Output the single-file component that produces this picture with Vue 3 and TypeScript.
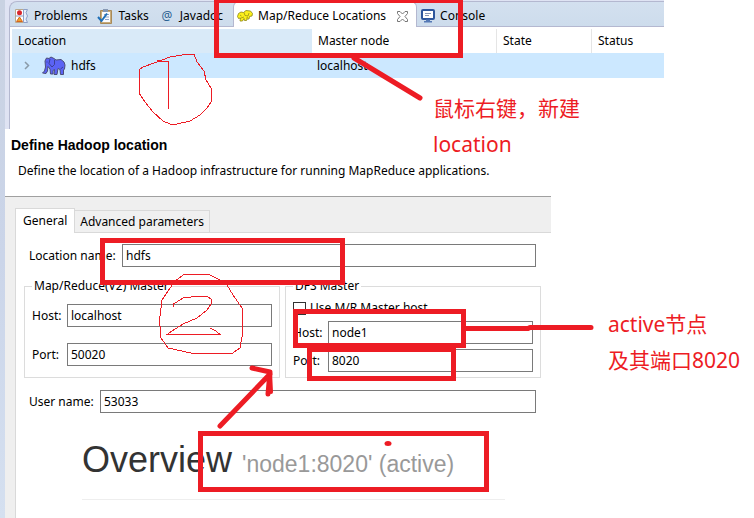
<script setup lang="ts">
import { ref } from 'vue'

const locationName = ref('hdfs')
const mrHost = ref('localhost')
const mrPort = ref('50020')
const dfsHost = ref('node1')
const dfsPort = ref('8020')
const userName = ref('53033')
const useMrHost = ref(false)

interface Frame { x: number; y: number; w: number; h: number }
// Centre lines of the 5px marker frames
const frames: Frame[] = [
  { x: 216, y: 0, w: 244, h: 55 },
  { x: 102, y: 240, w: 240, h: 42 },
  { x: 295, y: 311, w: 168, h: 34 },
  { x: 309, y: 349, w: 144, h: 29 },
  { x: 200, y: 433, w: 286, h: 56 },
]
</script>

<template>
  <div class="page">
    <div class="edge"></div>
    <main class="main">
      <section class="view">
        <div class="tabbar" role="tablist">
          <button class="tab" role="tab">
            <svg class="icon" width="15" height="16" viewBox="0 0 15 16">
              <path d="M1.500 1.500h8v13h-8z" fill="#fff" stroke="#b9a98c" />
              <path d="M1.500 8h8" stroke="#8d9cc0" />
              <path d="M9.500 1.500h4q-3 3 0 6.500q-3 3 0 6.500h-4z" fill="#e8eefb" stroke="#8ea0c8" />
              <circle cx="5.500" cy="4.800" r="2.500" fill="#d8262c" />
              <path d="M5.500 9l3 4.500h-6z" fill="#f0a429" stroke="#d6641c" />
            </svg>
            <span>Problems</span>
          </button>
          <button class="tab" role="tab">
            <svg class="icon" width="16" height="16" viewBox="0 0 16 16">
              <path d="M3.500 2.500h11v13h-11z" fill="#c9ad7c" stroke="#a98a58" />
              <path d="M5 4h8v10H5z" fill="#fbfcff" />
              <path d="M6 1h5v3H6z" fill="#8798b4" />
              <path d="M7 6.500h5M7 9h5M8 11.500h4" stroke="#8fa5cc" />
              <path d="M1 9l3.500 4L10 5.500" fill="none" stroke="#2070b8" stroke-width="2" />
            </svg>
            <span>Tasks</span>
          </button>
          <button class="tab" role="tab">
            <span class="at">@</span>
            <span>Javadoc</span>
          </button>
          <button class="tab active" role="tab" aria-selected="true">
            <svg class="icon" width="16" height="16" viewBox="0 0 16 16">
              <path d="M0.500 8.500L1.500 5.500L4 4L6.500 4.500L9 2.500L13.500 3L15.500 5.500L15 8L12.500 8.500L12 11H10L9.500 12.500H7.500L7 10.500L5.500 13H3L3.500 10L1.500 10.500z" fill="#fbf01c" stroke="#8c8413" stroke-width="0.800" />
              <path d="M3 7l1.500 1M7 4.500l1 3 3 .5 1-3M4 10l3-1M9 10.500l2-1.500" fill="none" stroke="#9b9115" stroke-width="0.800" />
            </svg>
            <span>Map/Reduce Locations</span>
            <svg class="close" width="11" height="11" viewBox="0 0 11 11">
              <path d="M0.500 0.500h2.500l2.500 2.500L8 0.500h2.500v2L8 5.500l2.500 3v2H8L5.500 8L3 10.500H0.500v-2L3 5.500L0.500 2.500z" fill="#fff" stroke="#777" />
            </svg>
          </button>
          <button class="tab" role="tab">
            <svg class="icon" width="14" height="14" viewBox="0 0 14 14">
              <rect x="1" y="1" width="12" height="9" rx="1" fill="#fff" stroke="#2c559c" stroke-width="2" />
              <path d="M4 4.500h6M4 6.500h4" stroke="#8494b4" />
              <path d="M5 10.500h4v1.500h2v1.500H3v-1.500h2z" fill="#5579b5" />
            </svg>
            <span>Console</span>
          </button>
        </div>
        <table class="grid">
          <thead>
            <tr><th class="sorted">Location</th><th>Master node</th><th>State</th><th>Status</th></tr>
          </thead>
          <tbody>
            <tr>
              <td>
                <div class="node">
                  <svg width="6" height="9" viewBox="0 0 6 9"><path d="M1 1l3.500 3.500L1 8" fill="none" stroke="#8a9aa8" stroke-width="1.500" /></svg>
                  <svg class="elephant" width="24" height="20" viewBox="0 0 24 20">
                    <path d="M3 5L4.500 2L7 2.500L9 1L12 2.500L14 4L19 3.500L22 6L23 9L22.500 13L21.500 14V18.500H18.500L18 13.500L16 12.500L15 18.500H12L12.500 13.500L11 14.500V18H8.500L8 13L6 10.500L5.500 15L4 17.500L0.500 17L2.500 15L3.500 11z" fill="#5b63f5" stroke="#4b4d78" />
                    <path d="M8 3L7 7.500L10 11L12.500 8.500L12.500 4M18.500 13l2.500-2M4.500 6h1" fill="none" stroke="#3c4094" />
                  </svg>
                  <span>hdfs</span>
                </div>
              </td>
              <td class="host">localhost</td><td></td><td></td>
            </tr>
          </tbody>
        </table>
      </section>

      <section class="dialog">
        <header class="banner">
          <h2>Define Hadoop location</h2>
          <p>Define the location of a Hadoop infrastructure for running MapReduce applications.</p>
        </header>
        <div class="folder">
          <div class="foldertabs" role="tablist">
            <button class="ftab on" role="tab" aria-selected="true">General</button>
            <button class="ftab" role="tab">Advanced parameters</button>
            <span class="rest"></span>
          </div>
          <div class="pane">
            <div class="row name">
              <label for="loc">Location name:</label><input id="loc" v-model="locationName" />
            </div>
            <div class="groups">
              <fieldset>
                <legend>Map/Reduce(V2) Master</legend>
                <div class="fields loose">
                  <div class="row"><label for="mh">Host:</label><input id="mh" v-model="mrHost" /></div>
                  <div class="row"><label for="mp">Port:</label><input id="mp" v-model="mrPort" /></div>
                </div>
              </fieldset>
              <fieldset>
                <legend>DFS Master</legend>
                <div class="fields">
                  <label class="check"><input v-model="useMrHost" type="checkbox" />Use M/R Master host</label>
                  <div class="row"><label for="dh">Host:</label><input id="dh" v-model="dfsHost" /></div>
                  <div class="row"><label for="dp">Port:</label><input id="dp" v-model="dfsPort" /></div>
                </div>
              </fieldset>
            </div>
            <div class="row user">
              <label for="un">User name:</label><input id="un" v-model="userName" />
            </div>
            <h1 class="overview">Overview <small>'node1:8020' (active)</small></h1>
          </div>
        </div>
      </section>
    </main>

    <svg class="marks" width="754" height="518" viewBox="0 0 754 518" aria-hidden="true">
      <g fill="none" stroke="#ed1c24" stroke-width="5" transform="translate(0.5 0.5)">
        <rect v-for="(f, i) in frames" :key="i" :x="f.x" :y="f.y" :width="f.w" :height="f.h" />
      </g>
      <g fill="none" stroke="#ed1c24" stroke-width="5" stroke-linecap="round" stroke-linejoin="round">
        <path d="M354 58L420 98" />
        <path d="M466 328.500H528L530 327.500H591" />
        <path d="M220 426L270 374M252 368L270 372L268 394" />
        <path d="M270 372L271 392" stroke-width="4" />
      </g>
      <ellipse cx="388" cy="443.500" rx="3.500" ry="2.500" fill="#ed1c24" />
      <g class="pen" fill="none" stroke="#ed1c24">
        <path d="M188 54H194L197 62L204 71L206 80L211 88V102L207 108L200 115L190 121L177 124H170L163 121L153 112L145 102L139 93V70L143 67L157 62L170 57L182 55z" />
        <path d="M160 60L157 61H168.500V108.500" />
        <path d="M175 281L184 274.500H209L218 279L227 285L233 295L242 308V337L240 348L232 353.500H193L168 348L161 338L159.500 320L162 300L166 294z" />
        <path d="M173.500 307V304L183 298L200 296H207L211 299V304L207 310L197 318L183 324L172 331L167 334.500H220L216 331L210 328" />
      </g>
    </svg>
    <p class="note first">鼠标右键，新建<br />location</p>
    <p class="note second">active节点<br />及其端口8020</p>
  </div>
</template>

<style>
body {
  margin: 0;
  background: #fff;
}
</style>

<style scoped>
.page {
  position: relative;
  display: flex;
  min-height: 100vh;
  overflow: hidden;
  color: #000;
  font: 12px/16px "Noto Sans", "Noto Sans CJK SC", sans-serif;
}
.edge {
  flex: 0 0 5px;
  background: linear-gradient(#c9d2e2, #cbd5e9 50%, #d5e0f0);
}
.main {
  flex: 1;
  display: flex;
  flex-direction: column;
}
button,
input {
  font: inherit;
  color: inherit;
}
.view {
  box-sizing: border-box;
  max-width: 659px;
  height: 129px;
  padding-top: 1px;
  background: #dfe3f3;
  padding-left: 4px;
  display: flex;
  flex-direction: column;
}
.tabbar {
  display: flex;
  height: 26px;
  box-sizing: border-box;
  border: 1px solid #b4b8d0;
  border-right: 0;
  border-radius: 8px 0 0 0;
  background: linear-gradient(#d3e0ef, #cddcec);
}
.tab {
  display: flex;
  align-items: center;
  gap: 5px;
  border: 0;
  padding: 3px 6px 0 4px;
  background: none;
  white-space: nowrap;
}
.tab.active {
  margin: -1px 0 -1px 4px;
  padding: 3px 8px 0 3px;
  border: 1px solid #b4b8d0;
  border-bottom: 0;
  border-radius: 6px 6px 0 0;
  background: #fff;
}
.close {
  margin-left: 6px;
}
.at {
  width: 16px;
  text-align: center;
  color: #2a6191;
}
.grid {
  flex: 1;
  display: block;
  border-left: 1px solid #b4b8d0;
  padding: 2px 0 0 2px;
  background: #fff;
  border-spacing: 0;
}
.grid thead,
.grid tbody {
  display: block;
}
.grid tr {
  display: grid;
  grid-template-columns: 300px 185px 95px 1fr;
}
.grid th {
  box-sizing: border-box;
  height: 24px;
  padding: 4px 6px;
  border-right: 1px solid #e5e5e5;
  font-weight: 400;
  text-align: left;
}
.grid th.sorted {
  background: #d9eaf8;
  border-color: #d9eaf8;
}
.grid th:last-child {
  border: 0;
}
.grid td {
  height: 25px;
  padding: 0;
  background: #cce8ff;
}
.grid td.host {
  padding-left: 5px;
  line-height: 25px;
}
.node {
  display: flex;
  align-items: center;
  height: 25px;
  padding-left: 12px;
}
.elephant {
  margin: 0 5px 0 12px;
}
.dialog {
  flex: 1;
  display: flex;
  flex-direction: column;
  max-width: 546px;
}
.banner {
  box-sizing: border-box;
  height: 68px;
  padding: 8px 6px 0;
  border-bottom: 1px solid #a0a0a0;
}
.banner h2 {
  margin: 0;
  font: bold 14px/16px "Liberation Sans", Arial, sans-serif;
}
.banner p {
  margin: 10px 7px 0;
  white-space: nowrap;
}
.folder {
  flex: 1;
  display: flex;
  flex-direction: column;
  padding: 11px 0 0 10px;
  background: #efefef;
}
.foldertabs {
  display: flex;
  align-items: flex-end;
  height: 25px;
}
.ftab {
  height: 23px;
  padding: 0 5px;
  border: 1px solid #d9d9d9;
  border-left: 0;
  background: #f0f0f0;
}
.ftab.on {
  height: 25px;
  padding: 0 7px;
  border-left: 1px solid #d9d9d9;
  border-bottom: 0;
  background: #fff;
}
.rest {
  flex: 1;
  border-bottom: 1px solid #d9d9d9;
}
.pane {
  flex: 1;
  padding: 11px 15px 0 8px;
  border-left: 1px solid #d9d9d9;
  background: #fff;
}
.row {
  display: flex;
  align-items: center;
}
.row input {
  flex: 1;
  min-width: 0;
  box-sizing: border-box;
  height: 23px;
  padding: 0 3px;
  border: 1px solid #7a7a7a;
  border-radius: 0;
  background: #fff;
}
.row label {
  flex: 0 0 35px;
}
.name label {
  flex-basis: 93px;
}
.user label {
  flex-basis: 71px;
}
.name,
.user {
  padding-left: 5px;
}
.groups {
  display: grid;
  grid-template-columns: 1fr 1fr;
  gap: 5px;
  margin: 11px -5px 12px 0;
}
fieldset {
  min-width: 0;
  margin: 0;
  padding: 0 7px 5px;
  border: 1px solid #dcdcdc;
}
legend {
  padding: 0 2px;
}
.fields {
  display: flex;
  flex-direction: column;
  gap: 5px;
  padding-top: 6px;
}
.fields.loose {
  gap: 16px;
  padding: 10px 0 6px;
}
.check {
  display: flex;
  align-items: center;
  gap: 4px;
}
.check input {
  appearance: none;
  width: 13px;
  height: 13px;
  margin: 0;
  border: 1px solid #333;
  background: #fff;
}
.overview {
  margin: 27px 31px 0 58px;
  padding-bottom: 15px;
  border-bottom: 1px solid #eee;
  color: #333;
  font: 36px/40px "Liberation Sans", Arial, sans-serif;
  white-space: nowrap;
}
.overview small {
  color: #999;
  font-size: 23px;
}
.marks {
  position: absolute;
  top: 0;
  left: 0;
  pointer-events: none;
}
.pen {
  shape-rendering: crispEdges;
}
.note {
  position: absolute;
  margin: 0;
  color: #ed1c24;
  font: 21px/36px "Noto Sans", "Noto Sans CJK SC", sans-serif;
  white-space: nowrap;
}
.first {
  left: 433px;
  top: 90px;
}
.second {
  left: 608px;
  top: 306px;
}
</style>
